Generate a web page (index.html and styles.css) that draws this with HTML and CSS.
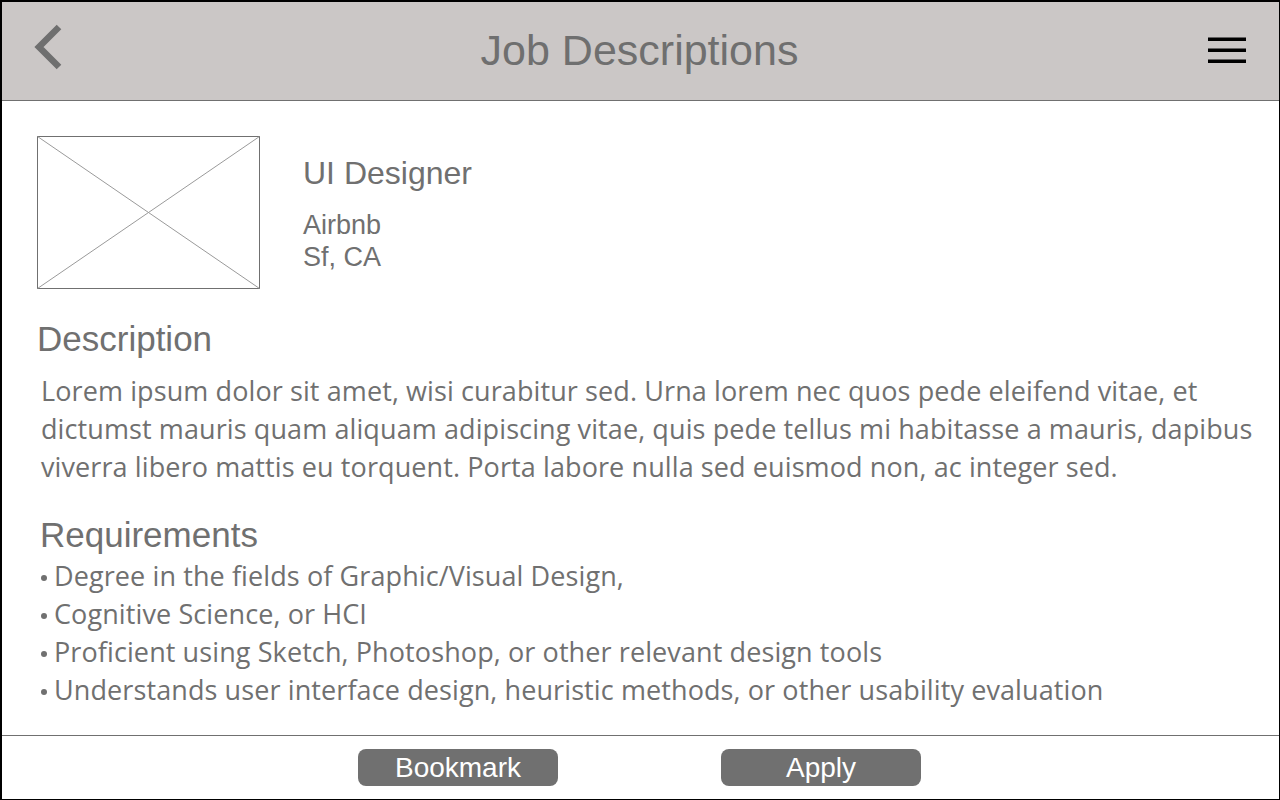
FILE: index.html
```html
<!DOCTYPE html>
<html>
<head>
<meta charset="utf-8">
<link rel="stylesheet" href="styles.css">
</head>
<body>
<div class="frame">
  <header class="topbar">
    <svg class="back" width="40" height="60" viewBox="0 0 40 60"><polyline points="28,6 8,26 28,46" fill="none" stroke="#6f6f6f" stroke-width="6.5" stroke-linecap="butt" stroke-linejoin="miter"/></svg>
    <h1 class="title">Job Descriptions</h1>
    <svg class="menu" width="40" height="30" viewBox="0 0 40 30"><rect x="0" y="1.5" width="38" height="3.5" fill="#000"/><rect x="0" y="12.5" width="38" height="3.5" fill="#000"/><rect x="0" y="23.5" width="38" height="3.5" fill="#000"/></svg>
  </header>
  <main class="content">
    <section class="job">
      <svg class="thumb" width="224" height="154" viewBox="0 0 224 154"><rect x="0.5" y="0.5" width="222" height="152" fill="#fff" stroke="#707070"/><line x1="0.5" y1="0.5" x2="222.5" y2="152.5" stroke="#9a9a9a"/><line x1="222.5" y1="0.5" x2="0.5" y2="152.5" stroke="#9a9a9a"/></svg>
      <div class="info">
        <h2 class="role">UI Designer</h2>
        <p class="company">Airbnb<br>Sf, CA</p>
      </div>
    </section>
    <h3 class="heading desc-h">Description</h3>
    <p class="body">Lorem ipsum dolor sit amet, wisi curabitur sed. Urna lorem nec quos pede eleifend vitae, et<br>dictumst mauris quam aliquam adipiscing vitae, quis pede tellus mi habitasse a mauris, dapibus<br>viverra libero mattis eu torquent. Porta labore nulla sed euismod non, ac integer sed.</p>
    <h3 class="heading req-h">Requirements</h3>
    <ul class="reqs">
      <li>Degree in the fields of Graphic/Visual Design,</li>
      <li>Cognitive Science, or HCI</li>
      <li>Proficient using Sketch, Photoshop, or other relevant design tools</li>
      <li>Understands user interface design, heuristic methods, or other usability evaluation</li>
    </ul>
  </main>
  <footer class="actions">
    <button class="btn">Bookmark</button>
    <button class="btn">Apply</button>
  </footer>
</div>
</body>
</html>
```
FILE: styles.css
```css
* { box-sizing: border-box; }
html, body { margin: 0; padding: 0; background: #fff; }
.frame {
  width: 1280px;
  height: 800px;
  border-style: solid;
  border-color: #000;
  border-width: 2px 1px 1px 2px;
  display: flex;
  flex-direction: column;
  font-family: "Liberation Sans", Arial, sans-serif;
  color: #707070;
  overflow: hidden;
}
.topbar {
  height: 99px;
  flex: none;
  background: #cbc7c6;
  border-bottom: 1px solid #707070;
  display: flex;
  align-items: center;
  justify-content: space-between;
  padding: 0 31px 0 29px;
}
.back { display: block; }
.title {
  margin: 0;
  font-weight: normal;
  font-size: 43px;
  color: #6f6f6f;
  flex: 1;
  text-align: center;
  margin-top: -2px;
}
.menu { display: block; }
.content {
  flex: 1;
  padding: 35px 20px 0 35px;
}
.job { display: flex; align-items: flex-start; }
.thumb { display: block; flex: none; }
.info { margin-left: 42px; padding-top: 17px; }
.role { margin: 0; font-weight: normal; font-size: 32px; line-height: 40px; }
.company { margin: 16px 0 0; font-size: 27px; line-height: 32px; }
.heading { margin: 0; font-weight: normal; font-size: 35px; line-height: 40px; }
.desc-h { margin-top: 29px; }
.req-h { margin-top: 30px; margin-left: 3px; line-height: 38px; }
.body {
  margin: 13px 0 0 4px;
  font-family: "Open Sans", sans-serif;
  font-size: 27px;
  letter-spacing: 0.1px;
  line-height: 38px;
  white-space: nowrap;
}
.reqs {
  list-style: none;
  margin: 3px 0 0 4px;
  padding: 0;
  font-family: "Open Sans", sans-serif;
  font-size: 27px;
  letter-spacing: 0.1px;
  line-height: 38px;
  white-space: nowrap;
}
.reqs li::before {
  content: "";
  display: inline-block;
  width: 6px;
  height: 6px;
  border-radius: 50%;
  background: #707070;
  margin-right: 7px;
  vertical-align: 5px;
}
.actions {
  flex: none;
  height: 64px;
  border-top: 1px solid #707070;
  display: flex;
  justify-content: center;
  gap: 163px;
  padding: 13px 2px 0 0;
}
.btn {
  width: 200px;
  height: 37px;
  border: none;
  border-radius: 8px;
  background: #707070;
  color: #fff;
  font-family: "Liberation Sans", Arial, sans-serif;
  font-size: 28px;
  padding: 0;
  line-height: 37px;
}
```
